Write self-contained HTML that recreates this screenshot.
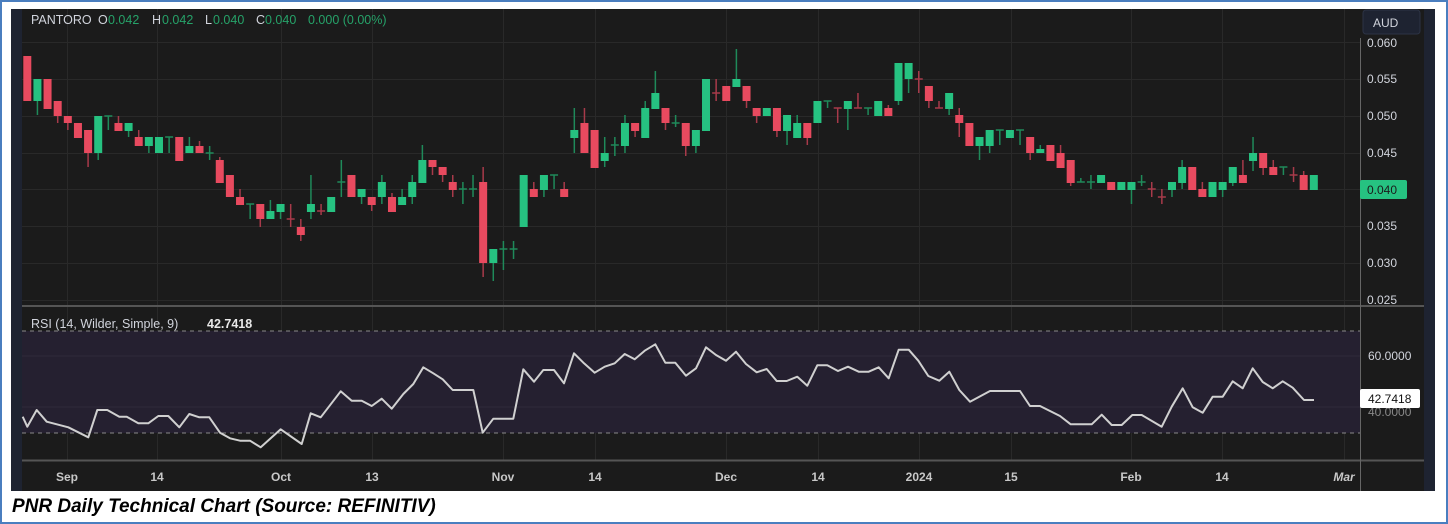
<!DOCTYPE html>
<html><head><meta charset="utf-8"><style>
html,body{margin:0;padding:0;background:#fff;}
body{width:1448px;height:524px;overflow:hidden;position:relative;font-family:"Liberation Sans",sans-serif;}
#frame{position:absolute;left:0;top:0;width:1444px;height:520px;border:2px solid #4a7ebf;}
svg{position:absolute;left:0;top:0;}
.cap{position:absolute;left:12px;top:496px;font:italic bold 19px "Liberation Sans",sans-serif;color:#000;}
</style></head><body>
<div id="frame"></div>
<svg id="s" width="1448" height="524" xmlns="http://www.w3.org/2000/svg">
<rect x="11" y="9" width="1424" height="482" fill="#1b1b1b"/>
<rect x="11" y="9" width="11" height="482" fill="#1e2331"/>
<rect x="1424" y="9" width="11" height="482" fill="#1e2331"/>
<g id="grid" stroke="#292929" stroke-width="1"></g>
<rect x="22" y="331" width="1338" height="102" fill="#252030"/>
<line x1="22" y1="356" x2="1360" y2="356" stroke="#302a3a"/>
<line x1="22" y1="407" x2="1360" y2="407" stroke="#302a3a"/>
<line x1="22" y1="331" x2="1360" y2="331" stroke="#8a8a8a" stroke-dasharray="4,4"/>
<line x1="22" y1="433" x2="1360" y2="433" stroke="#8a8a8a" stroke-dasharray="4,4"/>
<g id="cand"></g>
<polyline id="rsi" fill="none" stroke="#d0d0d0" stroke-width="2" stroke-linejoin="round"/>
<line x1="22" y1="306" x2="1424" y2="306" stroke="#555" stroke-width="2"/>
<line x1="22" y1="460.5" x2="1424" y2="460.5" stroke="#555" stroke-width="2"/>
<line x1="1360.5" y1="38" x2="1360.5" y2="491" stroke="#666" stroke-width="1"/>
<rect x="1363" y="10" width="57" height="24" rx="3" fill="#1e2331" stroke="#2c3345"/>
<text x="1373" y="27" fill="#d1d4dc" font-size="12">AUD</text>
<g fill="#d1d4dc" font-size="12">
<text x="1367" y="47">0.060</text><text x="1367" y="83">0.055</text><text x="1367" y="120">0.050</text>
<text x="1367" y="157">0.045</text><text x="1367" y="230">0.035</text><text x="1367" y="267">0.030</text>
<text x="1367" y="304">0.025</text><text x="1368" y="360">60.0000</text>
<text x="1368" y="416" fill="#888">40.0000</text>
</g>
<rect x="1360" y="180" width="47" height="19" rx="2" fill="#26c281"/>
<text x="1367" y="194" fill="#1b1b1b" font-size="12">0.040</text>
<rect x="1360" y="389" width="60" height="19" rx="2" fill="#fff"/>
<text x="1368" y="403" fill="#111" font-size="12">42.7418</text>
<g fill="#d1d4dc" font-size="12.5">
<text x="31" y="24">PANTORO</text>
<text x="98" y="24">O</text><text x="152" y="24">H</text><text x="205" y="24">L</text><text x="256" y="24">C</text>
</g>
<g fill="#26a269" font-size="12.5">
<text x="108" y="24">0.042</text><text x="162" y="24">0.042</text><text x="213" y="24">0.040</text><text x="265" y="24">0.040</text><text x="308" y="24">0.000 (0.00%)</text>
</g>
<text x="31" y="328" fill="#d1d4dc" font-size="12.5">RSI (14, Wilder, Simple, 9)</text>
<text x="207" y="328" fill="#e8e8e8" font-size="12.5" font-weight="bold">42.7418</text>
<g fill="#c8c8c8" font-size="12" font-weight="bold" text-anchor="middle" id="tl"></g>
</svg>
<div class="cap">PNR Daily Technical Chart (Source: REFINITIV)</div>
<script>
var NS="http://www.w3.org/2000/svg";
function el(p,n,a){var e=document.createElementNS(NS,n);for(var k in a)e.setAttribute(k,a[k]);p.appendChild(e);return e;}
var g=document.getElementById('grid');
[42,79,116,153,189,226,263,300].forEach(function(y){el(g,'line',{x1:22,y1:y+.5,x2:1360,y2:y+.5});});
var vx=[67,157,281,372,503,595,726,818,919,1011,1131,1222,1344];
vx.forEach(function(x){el(g,'line',{x1:x+.5,y1:9,x2:x+.5,y2:460});});
var labs=["Sep","14","Oct","13","Nov","14","Dec","14","2024","15","Feb","14","Mar"];
var tl=document.getElementById('tl');
labs.forEach(function(t,i){var e=el(tl,'text',{x:vx[i],y:481});e.textContent=t;if(t=="Mar")e.setAttribute('font-style','italic');});
var D=[
['r',56,101,56,101],['g',79,101,79,115],['r',79,109,79,109],['r',101,116,101,123],['r',116,123,116,130],['r',123,138,123,138],['r',130,153,130,167],['g',116,153,116,160],['g',116,116,116,130],['r',123,131,116,131],
['g',123,131,123,137],['r',137,146,130,146],['g',137,146,137,153],['g',137,153,137,153],['g',137,137,137,153],['r',137,161,137,161],['g',146,153,137,153],['r',146,153,141,153],['g',153,153,146,160],['r',160,183,157,183],
['r',175,197,175,197],['r',197,205,189,205],['g',204,204,204,219],['r',204,219,204,227],['g',211,219,200,219],['g',204,212,204,219],['r',219,219,204,227],['r',227,235,219,241],['g',204,212,175,219],['r',211,211,204,215],
['g',197,212,197,212],['g',182,182,160,197],['r',175,197,175,197],['g',189,197,189,204],['r',197,205,197,211],['g',182,197,175,204],['r',197,212,193,212],['g',197,205,189,205],['g',182,197,175,204],['g',160,183,145,183],
['r',160,167,160,175],['r',167,175,167,182],['r',182,190,175,197],['g',189,189,182,204],['g',189,189,175,197],['r',182,263,167,277],['g',249,263,249,281],['g',249,249,241,270],['g',249,249,241,259],['g',175,227,175,227],
['r',189,197,182,197],['g',175,190,175,197],['g',175,175,175,189],['r',189,197,182,197],['g',130,138,108,153],['r',123,153,108,153],['r',130,168,130,168],['g',153,161,137,167],['g',145,145,137,156],['g',123,146,115,153],
['r',123,131,123,137],['g',108,138,101,138],['g',93,109,71,109],['r',108,123,108,130],['g',123,123,115,127],['r',123,146,123,156],['g',130,146,130,153],['g',79,131,79,131],['r',93,93,79,101],['r',86,101,86,101],
['g',79,87,49,87],['r',86,101,86,108],['r',108,116,108,123],['g',108,116,108,116],['r',108,131,108,137],['g',115,131,115,145],['g',123,138,115,138],['r',123,138,123,145],['g',101,123,101,123],['g',101,101,101,108],
['r',108,108,108,123],['g',101,109,101,130],['r',108,108,93,108],['g',108,108,108,115],['g',101,116,101,116],['r',108,116,105,116],['g',63,101,63,105],['g',63,79,63,93],['r',79,79,71,93],['r',86,101,86,108],
['r',108,108,101,108],['g',93,109,93,115],['r',115,123,108,137],['r',123,146,123,146],['g',137,146,137,160],['g',130,146,130,153],['g',130,130,130,145],['g',130,138,130,138],['g',130,130,130,145],['r',137,153,137,160],
['g',149,153,145,153],['r',145,161,145,161],['r',153,168,145,168],['r',160,183,160,186],['g',182,182,178,182],['g',182,182,175,189],['g',175,183,175,183],['r',182,190,182,190],['g',182,190,182,190],['g',182,190,182,204],
['g',182,182,175,186],['r',189,189,182,197],['r',197,197,189,204],['g',182,190,182,197],['g',167,183,160,189],['r',167,190,167,190],['r',189,197,182,197],['g',182,197,182,197],['g',182,190,182,197],['g',167,183,167,186],
['r',175,183,160,183],['g',153,161,137,171],['r',153,168,153,175],['r',167,175,160,175],['g',167,167,167,175],['r',175,175,167,182],['r',175,190,171,190],['g',175,190,175,190]];
var c=document.getElementById('cand');
D.forEach(function(d,i){var x=27.3+i*10.13;var col=d[0]=='g'?'#26c281':'#e84a5f';var wc=d[0]=='g'?'#1f8a5a':'#a83a4a';
 if(d[4]-d[3]>d[2]-d[1])el(c,'line',{x1:x,y1:d[3],x2:x,y2:d[4],stroke:wc,'stroke-width':1.5});
 var h=Math.max(d[2]-d[1],1.5);el(c,'rect',{x:x-4,y:d[1]-(d[2]==d[1]?0.75:0),width:8,height:h,fill:d[2]==d[1]?wc:col});});
var P=[[22.7,416.7],[27.3,426.7],[36.7,410],[46.7,421.7],[68.3,427.3],[88.3,437.3],[97.3,410],[107.3,410],[119.3,416.7],[126.7,416.7],[138.3,423.3],[148.3,423.3],[158.3,416],[168.3,416],[179.3,427.3],[189.3,414],[199.3,417.3],[209.3,417.3],[220,432.7],[230,438.3],[240,440.7],[250,440.7],[260.7,447.3],[280.7,429.3],[301.7,444],[310.7,413.3],[320.7,417.3],[340.7,391.3],[351.7,400.7],[361.7,400.7],[371.7,406],[381.7,398.7],[391.7,408.7],[403.3,394],[413.3,384],[423.3,367.3],[433.3,373.3],[442.7,379.3],[452.7,390],[473.3,390],[482.7,432.7],[493.3,418.7],[513.3,418.7],[523.3,369.3],[534,381.7],[543.3,370],[554,370],[564,383.3],[574,353.3],[584,363.3],[594.7,372.7],[604.7,366.7],[614.7,363.3],[624.7,354],[634.7,359.3],[644.7,350.7],[655.3,344.3],[665.3,362.7],[675.3,362.7],[686,375.7],[696,368.3],[706,347.3],[716,355],[726,360.7],[736,351.7],[746,364],[756.7,372.3],[766.7,369],[776.7,381],[786.7,381],[797.3,376.7],[807.3,385.7],[817.3,365.3],[827.3,365.3],[838,371],[848,366.7],[858.7,371.7],[868.7,371.7],[878.7,367.3],[888.7,378.3],[898.7,349.7],[908.7,349.7],[918.3,360.7],[928.3,376],[939.3,380.7],[949.3,371.7],[959.3,390],[970,401.7],[990,391],[1020,391],[1030,406],[1040,406],[1060,416],[1070.7,424.3],[1091.7,424.3],[1101.7,414.7],[1111.7,425],[1121.7,425],[1132.3,415],[1141.7,415],[1161.7,426.7],[1171.7,406.7],[1182.7,388.3],[1192.7,407.3],[1202.7,412.7],[1212.7,396.7],[1222.7,396.7],[1232.7,381.3],[1242.7,388.3],[1252.7,368.3],[1262.7,382],[1272.7,388.3],[1282.7,381.3],[1292.7,387.7],[1304,400],[1314,400]];
document.getElementById('rsi').setAttribute('points',P.map(function(p){return p.join(',');}).join(' '));
</script>
</body></html>
